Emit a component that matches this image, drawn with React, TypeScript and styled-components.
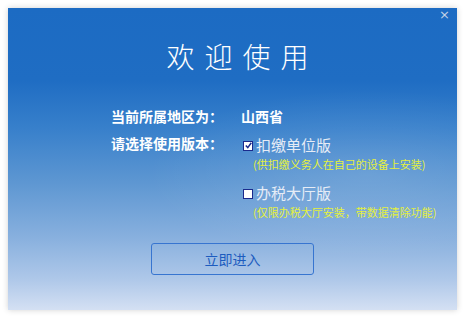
import React from "react";
import styled, { createGlobalStyle } from "styled-components";

const GlobalStyle = createGlobalStyle`
  html, body {
    margin: 0;
    padding: 0;
    background: #ffffff;
  }
  body {
    font-family: "Noto Sans CJK SC", "Noto Sans", sans-serif;
  }
`;

type version = {
  id: string;
  name: string;
  hint: string;
};

const versions: version[] = [
  { id: "unit", name: "扣缴单位版", hint: "(供扣缴义务人在自己的设备上安装)" },
  { id: "hall", name: "办税大厅版", hint: "(仅限办税大厅安装，带数据清除功能)" },
];

const App: React.FC = () => {
  const [picked, setPicked] = React.useState("unit");

  return (
    <Page>
      <GlobalStyle />
      <Window>
        <Close>×</Close>
        <Title>欢迎使用</Title>
        <Form>
          <Label>当前所属地区为：</Label>
          <Value>山西省</Value>
          <Label>请选择使用版本：</Label>
          <Options>
            {versions.map((v) => (
              <Option key={v.id} onClick={() => setPicked(v.id)}>
                <OptionRow>
                  <Box>
                    {picked === v.id ? (
                      <svg width="7" height="7" viewBox="0 0 7 7">
                        <path
                          d="M0.8 3.4 L2.8 5.6 L6.3 0.8"
                          fill="none"
                          stroke="#1b2a8c"
                          strokeWidth="1.5"
                        />
                      </svg>
                    ) : null}
                  </Box>
                  <OptionName>{v.name}</OptionName>
                </OptionRow>
                <Hint>{v.hint}</Hint>
              </Option>
            ))}
          </Options>
        </Form>
        <Enter>立即进入</Enter>
      </Window>
    </Page>
  );
};

export default App;

const Page = styled.div`
  width: 465px;
  height: 318px;
  padding: 8px;
  box-sizing: border-box;
`;

const Window = styled.div`
  position: relative;
  width: 449px;
  height: 302px;
  display: flex;
  flex-direction: column;
  align-items: center;
  box-sizing: border-box;
  padding-top: 30px;
  background:
    radial-gradient(ellipse 70% 40% at 80% 55%, rgba(255, 255, 255, 0.12), rgba(255, 255, 255, 0) 70%),
    linear-gradient(
      to bottom,
      #1c6bc3 0%,
      #1f6dc3 24%,
      #3880cb 40%,
      #5e97d2 58%,
      #88b0de 76%,
      #afc8e9 90%,
      #d4e0f3 100%
    );
  box-shadow: 0 0 6px rgba(0, 0, 0, 0.18);
`;

const Close = styled.div`
  position: absolute;
  top: 0px;
  right: 7px;
  font-family: "DejaVu Sans", sans-serif;
  font-size: 13px;
  line-height: 14px;
  color: #c2d2e6;
  cursor: pointer;
`;

const Title = styled.div`
  font-size: 28px;
  font-weight: 300;
  line-height: 36px;
  letter-spacing: 10px;
  color: #ffffff;
  margin-left: 20px;
`;

const Form = styled.div`
  align-self: flex-start;
  display: grid;
  grid-template-columns: 130px 1fr;
  row-gap: 7px;
  margin-top: 32px;
  margin-left: 103px;
`;

const Label = styled.div`
  font-size: 14px;
  font-weight: 700;
  line-height: 20px;
  color: #ffffff;
`;

const Value = styled.div`
  font-size: 14px;
  font-weight: 700;
  line-height: 20px;
  color: #ffffff;
`;

const Options = styled.div`
  display: flex;
  flex-direction: column;
  gap: 12px;
  margin-left: 2px;
  margin-top: 2px;
`;

const Option = styled.div`
  display: flex;
  flex-direction: column;
  cursor: pointer;
`;

const OptionRow = styled.div`
  display: flex;
  align-items: center;
  height: 20px;
`;

const Box = styled.span`
  width: 10px;
  height: 10px;
  box-sizing: border-box;
  border: 1px solid #1b2a8c;
  background: #ffffff;
  display: flex;
  align-items: center;
  justify-content: center;
  margin-right: 3px;
  margin-top: 1px;
`;

const OptionName = styled.span`
  font-size: 15px;
  line-height: 20px;
  color: #e6ecf6;
`;

const Hint = styled.div`
  font-size: 11px;
  line-height: 14px;
  color: #e4f03c;
  margin-left: 10px;
  margin-top: 2px;
  white-space: nowrap;
`;

const Enter = styled.button`
  margin-top: 24px;
  width: 163px;
  height: 32px;
  border: 1px solid #3775d0;
  border-radius: 3px;
  background: transparent;
  font-family: "Noto Sans CJK SC", "Noto Sans", sans-serif;
  font-size: 14px;
  color: #1d5cbf;
  cursor: pointer;
`;
